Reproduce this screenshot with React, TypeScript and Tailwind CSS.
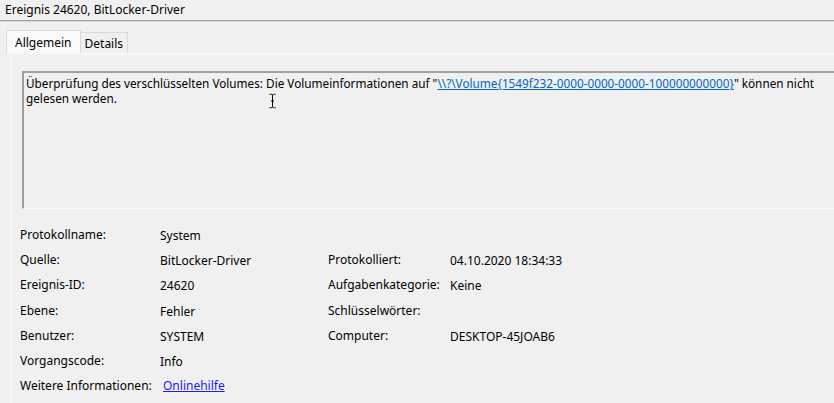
import React from "react";

const rows: [string, string, string?, string?][] = [
  ["Protokollname:", "System"],
  ["Quelle:", "BitLocker-Driver", "Protokolliert:", "04.10.2020 18:34:33"],
  ["Ereignis-ID:", "24620", "Aufgabenkategorie:", "Keine"],
  ["Ebene:", "Fehler", "Schlüsselwörter:", ""],
  ["Benutzer:", "SYSTEM", "Computer:", "DESKTOP-45JOAB6"],
  ["Vorgangscode:", "Info"],
];

const IBeam = () => (
  <svg width="9" height="16" viewBox="0 0 9 16" className="absolute left-[268px] top-[93px]">
    <path d="M1 1h2l1.5 1L6 1h2M4.5 2v12M1 15h2l1.5-1L6 15h2M3 8h3" stroke="#000" strokeWidth="1" fill="none" />
    <path d="M1 0.5h2M6 0.5h2M1 15.5h2M6 15.5h2" stroke="#fff" strokeWidth="0.6" fill="none" />
  </svg>
);

export default function App() {
  return (
    <div
      className="relative w-[834px] h-[403px] overflow-hidden bg-[#f0f0f0] text-[12px] text-[#000] leading-[15px]"
      style={{ fontFamily: '"Noto Sans", "Open Sans", sans-serif' }}
    >
      <div className="h-[20px] pl-[5px] pt-[2px] text-[12px]">Ereignis 24620, BitLocker-Driver</div>
      <div className="h-px bg-[#a0a0a0]" />
      <div className="h-px bg-[#d8d8d8]" />

      <div className="flex items-end pl-[6px] mt-[8px] h-[23px]">
        <div className="h-[23px] px-[8px] pt-[4px] bg-[#f9f9f9] border border-b-0 border-[#d9d9d9]">Allgemein</div>
        <div className="h-[21px] px-[4px] pt-[3px] border border-l-0 border-b-0 border-[#d9d9d9]">Details</div>
      </div>

      <div className="ml-[10px] border-t border-l border-[#fbfbfb] h-[360px]">
        <div className="ml-[11px] mt-[17px] w-[830px] h-[138px] border-t-2 border-l-2 border-[#a0a0a0] border-b border-b-[#fcfcfc] pl-[2px] pt-[3px] text-[11.75px] leading-[15px]">
          Überprüfung des verschlüsselten Volumes: Die Volumeinformationen auf "
          <span className="text-[#0066cc] underline">{"\\\\?\\Volume{1549f232-0000-0000-0000-100000000000}"}</span>
          " können nicht
          <br />
          gelesen werden.
        </div>

        <div className="mt-[18px] ml-[9px] grid grid-cols-[140px_168px_122px_1fr] auto-rows-[25.2px]">
          {rows.map(([l, v, l2, v2]) => (
            <React.Fragment key={l}>
              <div>{l}</div>
              <div className="pt-[1px]">{v}</div>
              <div>{l2 ?? ""}</div>
              <div className="pt-[1px]">{v2 ?? ""}</div>
            </React.Fragment>
          ))}
          <div>Weitere Informationen:</div>
          <div className="col-span-3 pl-[3px]">
            <span className="text-[#1a1aff] underline">Onlinehilfe</span>
          </div>
        </div>
      </div>

      <IBeam />
    </div>
  );
}
